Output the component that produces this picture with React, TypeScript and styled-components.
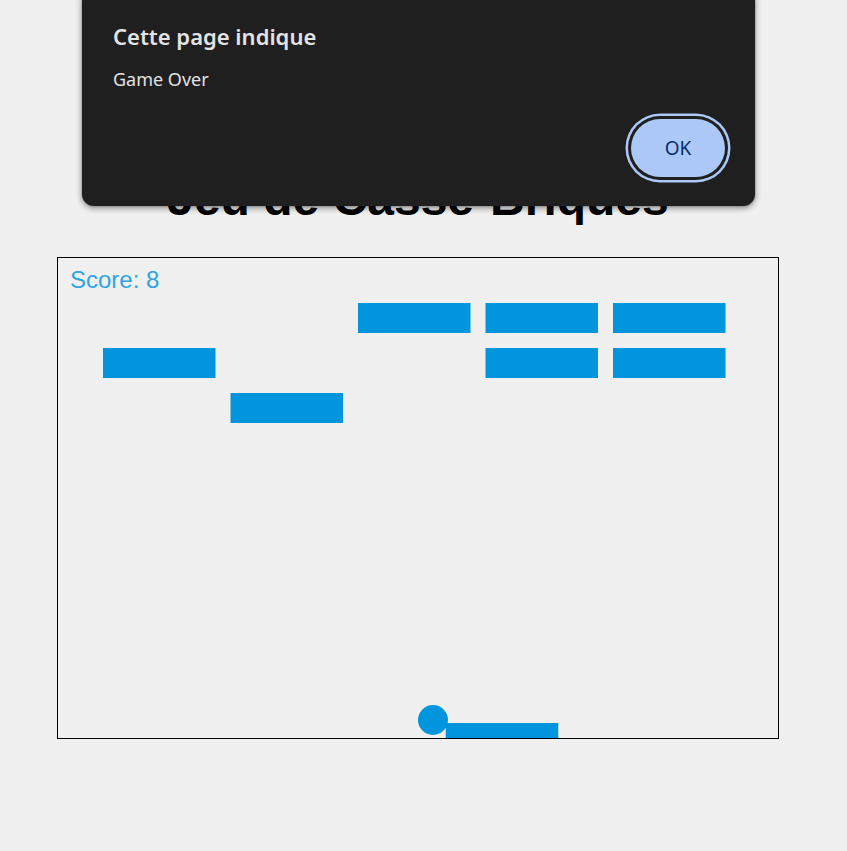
import React from "react";
import styled, { createGlobalStyle } from "styled-components";

const GlobalStyle = createGlobalStyle`
  html, body {
    margin: 0;
    padding: 0;
    background: #f0f0f0;
    font-family: "Liberation Sans", Arial, sans-serif;
  }
`;

const Page = styled.main`
  position: relative;
  width: 836px;
  height: 851px;
  display: flex;
  flex-direction: column;
  align-items: center;
  overflow: hidden;
`;

const Title = styled.h1`
  margin: 171px 0 31px;
  font-family: "Liberation Sans", Arial, sans-serif;
  font-size: 48px;
  line-height: 55px;
  font-weight: 700;
  color: #000;
`;

const Board = styled.svg`
  display: block;
  width: 720px;
  height: 480px;
  border: 1px solid #000;
  background: #f0f0f0;
  flex-shrink: 0;
`;

const BRICK_W = 75;
const BRICK_H = 20;
const BRICK_PAD = 10;
const OFFSET_LEFT = 30;
const OFFSET_TOP = 30;
const BLUE = "#0095DD";

const bricks: [number, number][] = [
  [0, 2],
  [0, 3],
  [0, 4],
  [1, 0],
  [1, 3],
  [1, 4],
  [2, 1],
];

const Dialog = styled.div`
  position: absolute;
  top: -12px;
  left: 82px;
  width: 673px;
  height: 218px;
  box-sizing: border-box;
  padding: 34px 30px 29px 31px;
  background: #1f1f1f;
  border-radius: 12px;
  box-shadow: 0 2px 6px rgba(0, 0, 0, 0.45), 0 0 2px rgba(0, 0, 0, 0.3);
  display: flex;
  flex-direction: column;
  font-family: "Noto Sans", "Open Sans", sans-serif;
  color: #e3e3e3;
`;

const DialogTitle = styled.div`
  font-size: 22px;
  line-height: 28px;
  font-weight: 600;
`;

const DialogMessage = styled.div`
  margin-top: 17px;
  font-size: 18px;
  line-height: 24px;
  font-weight: 400;
`;

const ButtonRow = styled.div`
  margin-top: auto;
  display: flex;
  justify-content: flex-end;
`;

const OkButton = styled.button`
  width: 94px;
  height: 58px;
  border: none;
  border-radius: 29px;
  background: #abc8f7;
  color: #0a2d6b;
  font-family: "Noto Sans", "Open Sans", sans-serif;
  font-size: 19px;
  font-weight: 400;
  padding: 0;
  box-shadow: 0 0 0 3px #1f1f1f, 0 0 0 5.5px #abc8f7;
  cursor: pointer;
`;

export default function App() {
  return (
    <>
      <GlobalStyle />
      <Page>
        <Title>Jeu de Casse-Briques</Title>
        <Board viewBox="0 0 480 320">
          <text
            x={8}
            y={20}
            fill="#2ea4e3"
            fontFamily="'Liberation Sans', Arial, sans-serif"
            fontSize={16}
          >
            Score: 8
          </text>
          {bricks.map(([r, c]) => (
            <rect
              key={`${r}-${c}`}
              x={c * (BRICK_W + BRICK_PAD) + OFFSET_LEFT}
              y={r * (BRICK_H + BRICK_PAD) + OFFSET_TOP}
              width={BRICK_W}
              height={BRICK_H}
              fill={BLUE}
            />
          ))}
          <circle cx={250} cy={308} r={10} fill={BLUE} />
          <rect x={258.5} y={310} width={75} height={10} fill={BLUE} />
        </Board>
        <Dialog role="alertdialog">
          <DialogTitle>Cette page indique</DialogTitle>
          <DialogMessage>Game Over</DialogMessage>
          <ButtonRow>
            <OkButton>OK</OkButton>
          </ButtonRow>
        </Dialog>
      </Page>
    </>
  );
}
